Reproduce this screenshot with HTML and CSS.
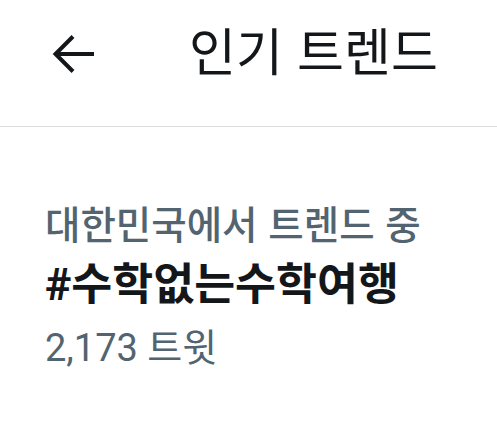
FILE: index.html
```html
<!DOCTYPE html>
<html lang="ko">
<head>
  <meta charset="UTF-8">
  <meta name="viewport" content="width=device-width, initial-scale=1.0">
  <title>인기 트렌드</title>
  <link rel="stylesheet" href="styles.css">
</head>
<body>
  <!-- Top bar -->
  <header class="top-bar">
    <button class="back-button" aria-label="뒤로">
      <svg width="44" height="44" viewBox="0 0 44 44">
        <path d="M43 22H5M22 4.5L4.5 22L22 39.5" fill="none" stroke="#14171a" stroke-width="4"/>
      </svg>
    </button>
    <h1 class="title">인기 트렌드</h1>
  </header>

  <!-- Trend item -->
  <div class="trend">
    <div class="trend-context">대한민국에서 트렌드 중</div>
    <div class="trend-name">#수학없는수학여행</div>
    <div class="trend-count">2,173 트윗</div>
  </div>
</body>
</html>
```

FILE: styles.css
```css
body {
  margin: 0;
  background: #ffffff;
  font-family: Roboto, "Noto Sans CJK KR", sans-serif;
  color: #14171a;
}

/* Top bar */
.top-bar {
  display: flex;
  align-items: flex-start;
  height: 126px;
  border-bottom: 1px solid #dcdcdc;
}

.back-button {
  display: flex;
  margin: 32px 0 0 51px;
  padding: 0;
  border: none;
  background: none;
}

.title {
  margin: 24px 0 0 94px;
  font-family: "Noto Sans CJK KR", sans-serif;
  font-size: 51px;
  font-weight: 400;
  line-height: 1;
}

/* Trend item */
.trend {
  padding: 64px 45px 0;
}

.trend-context {
  font-family: "Noto Sans CJK KR", sans-serif;
  font-size: 38.5px;
  line-height: 62px;
  color: #536471;
  font-weight: 500;
}

.trend-name {
  font-size: 44.5px;
  font-weight: 700;
  line-height: 64px;
}

.trend-count {
  font-size: 38px;
  color: #536471;
  line-height: 62px;
}
```
